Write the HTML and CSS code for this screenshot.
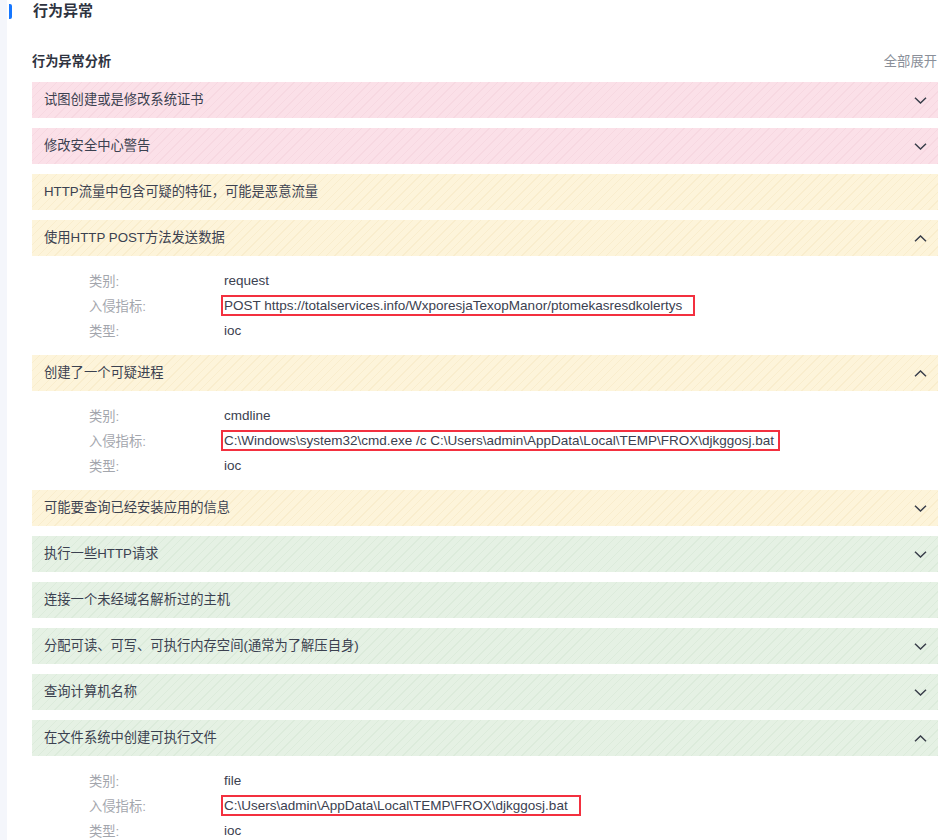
FILE: index.html
```html
<!DOCTYPE html>
<html lang="zh-CN">

<head>
    <meta charset="UTF-8">
    <meta name="viewport" content="width=device-width, initial-scale=1.0">
    <title>行为异常</title>
    <link rel="stylesheet" href="styles.css">
</head>

<body>
    <div class="page">
        <div class="side"></div>
        <div class="main">
            <h2 class="title">行为异常</h2>

            <div class="section-head">
                <h3 class="section-title">行为异常分析</h3>
                <span class="expand-all">全部展开</span>
            </div>

            <div class="item">
                <div class="item-head level-high">
                    <span>试图创建或是修改系统证书</span>
                    <svg class="arrow" width="13" height="7" viewBox="0 0 13 7"><path d="M1 .8l5.5 5.2L12 .8"/></svg>
                </div>
            </div>
            <div class="item">
                <div class="item-head level-high">
                    <span>修改安全中心警告</span>
                    <svg class="arrow" width="13" height="7" viewBox="0 0 13 7"><path d="M1 .8l5.5 5.2L12 .8"/></svg>
                </div>
            </div>
            <div class="item">
                <div class="item-head level-mid">
                    <span>HTTP流量中包含可疑的特征，可能是恶意流量</span>
                </div>
            </div>
            <div class="item">
                <div class="item-head level-mid">
                    <span>使用HTTP POST方法发送数据</span>
                    <svg class="arrow" width="13" height="7" viewBox="0 0 13 7"><path d="M1 6.2L6.5 1 12 6.2"/></svg>
                </div>
                <div class="item-body">
                    <div class="field"><span class="label">类别:</span><span class="value">request</span></div>
                    <div class="field"><span class="label">入侵指标:</span><span class="value"><span class="mark">POST https://totalservices.info/WxporesjaTexopManor/ptomekasresdkolertys</span></span></div>
                    <div class="field"><span class="label">类型:</span><span class="value">ioc</span></div>
                </div>
            </div>
            <div class="item">
                <div class="item-head level-mid">
                    <span>创建了一个可疑进程</span>
                    <svg class="arrow" width="13" height="7" viewBox="0 0 13 7"><path d="M1 6.2L6.5 1 12 6.2"/></svg>
                </div>
                <div class="item-body">
                    <div class="field"><span class="label">类别:</span><span class="value">cmdline</span></div>
                    <div class="field"><span class="label">入侵指标:</span><span class="value"><span class="mark mark-tight">C:\Windows\system32\cmd.exe /c C:\Users\admin\AppData\Local\TEMP\FROX\djkggosj.bat</span></span></div>
                    <div class="field"><span class="label">类型:</span><span class="value">ioc</span></div>
                </div>
            </div>
            <div class="item">
                <div class="item-head level-mid">
                    <span>可能要查询已经安装应用的信息</span>
                    <svg class="arrow" width="13" height="7" viewBox="0 0 13 7"><path d="M1 .8l5.5 5.2L12 .8"/></svg>
                </div>
            </div>
            <div class="item">
                <div class="item-head level-low">
                    <span>执行一些HTTP请求</span>
                    <svg class="arrow" width="13" height="7" viewBox="0 0 13 7"><path d="M1 .8l5.5 5.2L12 .8"/></svg>
                </div>
            </div>
            <div class="item">
                <div class="item-head level-low">
                    <span>连接一个未经域名解析过的主机</span>
                </div>
            </div>
            <div class="item">
                <div class="item-head level-low">
                    <span>分配可读、可写、可执行内存空间(通常为了解压自身)</span>
                    <svg class="arrow" width="13" height="7" viewBox="0 0 13 7"><path d="M1 .8l5.5 5.2L12 .8"/></svg>
                </div>
            </div>
            <div class="item">
                <div class="item-head level-low">
                    <span>查询计算机名称</span>
                    <svg class="arrow" width="13" height="7" viewBox="0 0 13 7"><path d="M1 .8l5.5 5.2L12 .8"/></svg>
                </div>
            </div>
            <div class="item">
                <div class="item-head level-low">
                    <span>在文件系统中创建可执行文件</span>
                    <svg class="arrow" width="13" height="7" viewBox="0 0 13 7"><path d="M1 6.2L6.5 1 12 6.2"/></svg>
                </div>
                <div class="item-body">
                    <div class="field"><span class="label">类别:</span><span class="value">file</span></div>
                    <div class="field"><span class="label">入侵指标:</span><span class="value"><span class="mark">C:\Users\admin\AppData\Local\TEMP\FROX\djkggosj.bat</span></span></div>
                    <div class="field"><span class="label">类型:</span><span class="value">ioc</span></div>
                </div>
            </div>
        </div>
    </div>
</body>

</html>
```

FILE: styles.css
```css
body {
    margin: 0;
    background-color: #fff;
    font-family: "Liberation Sans", "Noto Sans CJK SC", sans-serif;
    font-size: 13.3px;
    color: #3b4150;
}

.page {
    display: flex;
    min-height: 100vh;
}

.side {
    width: 7px;
    flex-shrink: 0;
    background-color: #f4f6fb;
}

.main {
    flex: 1;
    padding: 0 13px 0 25px;
}

.title {
    display: flex;
    align-items: center;
    gap: 21px;
    margin: 3px 0 0 -23px;
    font-size: 15px;
    font-weight: bold;
    line-height: 16px;
    color: #2e3340;
}

.title::before {
    content: "";
    width: 3px;
    height: 15px;
    border-radius: 0 2px 2px 0;
    background-color: #1677ff;
}

.section-head {
    display: flex;
    justify-content: space-between;
    align-items: center;
    margin: 33px 0 10px;
    line-height: 20px;
}

.section-title {
    margin: 0;
    font-size: 13.2px;
    font-weight: bold;
    color: #2e3340;
}

.expand-all {
    color: #8a8f99;
    margin-right: 1px;
}

.item {
    margin-bottom: 10px;
}

.item-head {
    display: flex;
    justify-content: space-between;
    align-items: center;
    height: 36px;
    box-sizing: border-box;
    padding: 0 11px 1px 12px;
    line-height: 20px;
}

.item-head .arrow {
    margin-top: 1px;
}

.level-high {
    background: repeating-linear-gradient(135deg, #fbe0e8 0, #fbe0e8 5px, #f7d8e1 5px, #f7d8e1 6px);
}

.level-mid {
    background: repeating-linear-gradient(135deg, #fdf4da 0, #fdf4da 5px, #f9edcd 5px, #f9edcd 6px);
}

.level-low {
    background: repeating-linear-gradient(135deg, #e5f1e4 0, #e5f1e4 5px, #dcebdb 5px, #dcebdb 6px);
}

.arrow path {
    fill: none;
    stroke: #3a3f4b;
    stroke-width: 1.5;
}

.item-body {
    padding: 12px 0 2px 57px;
}

.field {
    display: flex;
    align-items: center;
    height: 25px;
}

.label {
    width: 135px;
    flex-shrink: 0;
    color: #a3a6ad;
}

.value {
    font-size: 13.5px;
    color: #3b4150;
}

.mark {
    display: inline-block;
    margin-left: -3px;
    padding: 0 11px 0 1px;
    line-height: 17px;
    border: 2px solid #f3303f;
}

.mark-tight {
    padding-right: 4px;
}
```
